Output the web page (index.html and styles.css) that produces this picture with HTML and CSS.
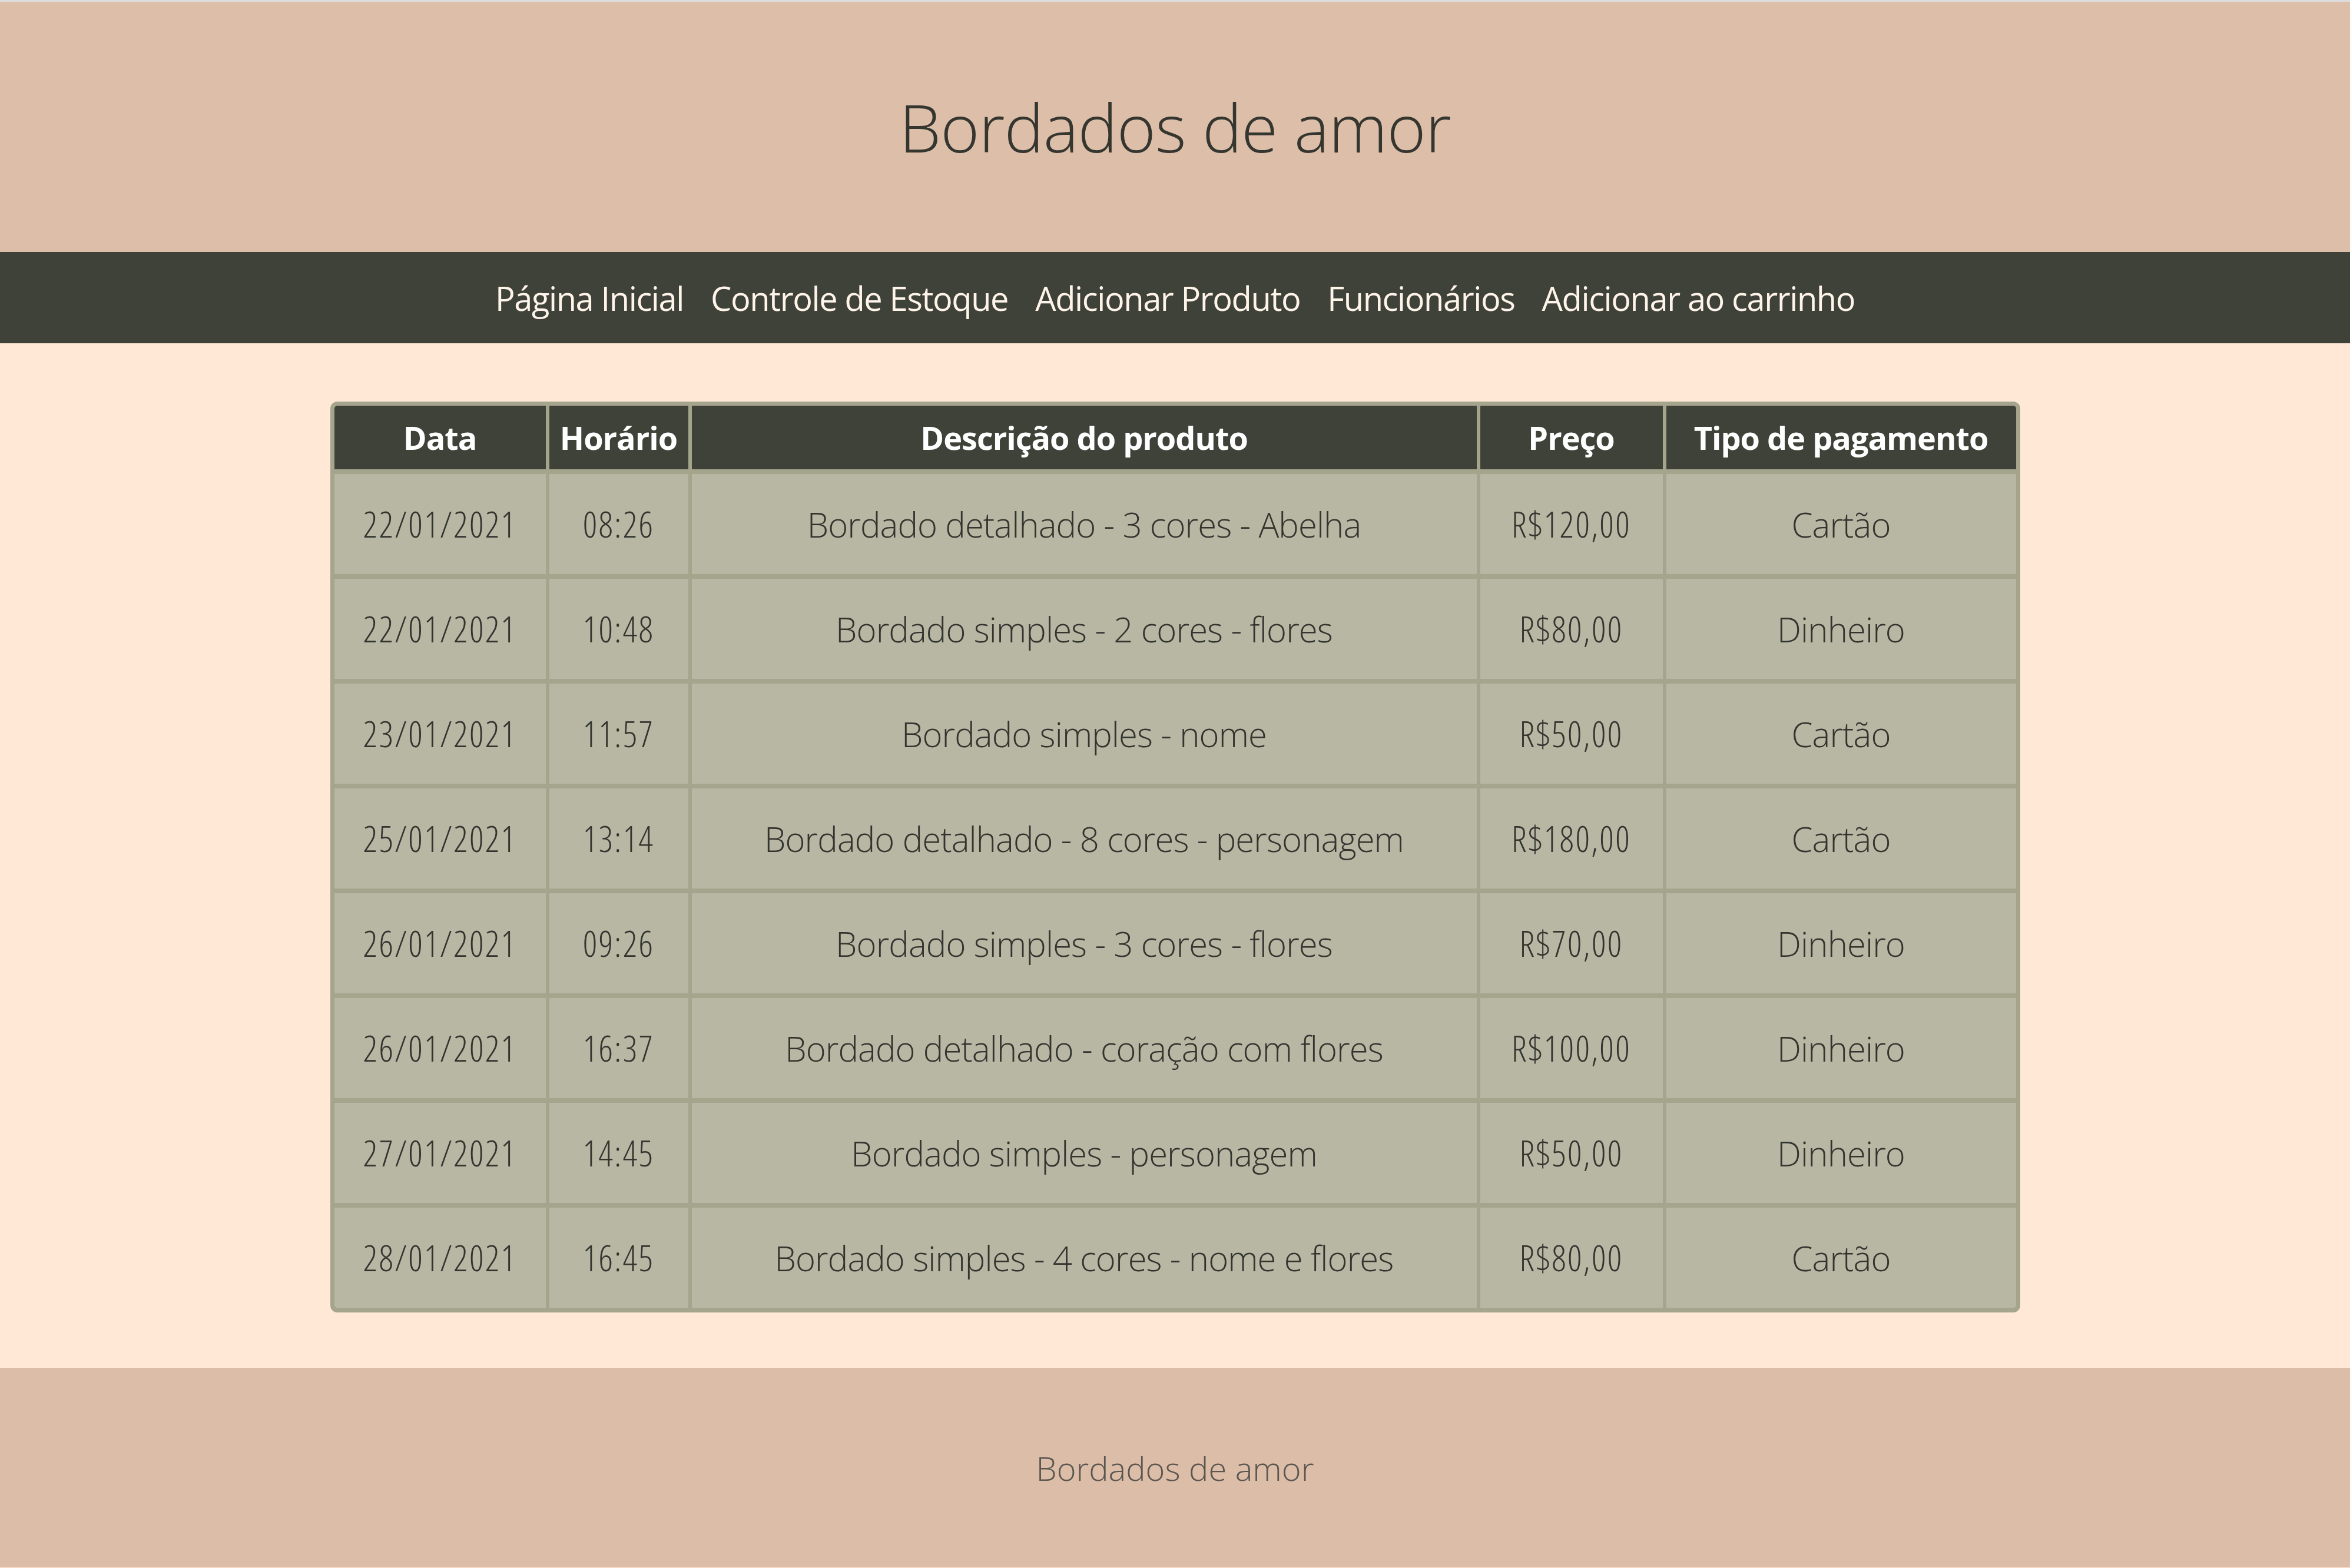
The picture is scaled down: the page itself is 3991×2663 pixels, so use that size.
FILE: index.html
```html
<!DOCTYPE html>
<html lang="pt-BR">
<head>
<meta charset="utf-8">
<title>Bordados de amor</title>
<link rel="stylesheet" href="styles.css">
</head>
<body>
<header class="site-header">
  <h1 class="site-title">Bordados de amor</h1>
</header>
<nav class="site-nav">
  <a href="#" class="nav-link">Página Inicial</a>
  <a href="#" class="nav-link">Controle de Estoque</a>
  <a href="#" class="nav-link">Adicionar Produto</a>
  <a href="#" class="nav-link">Funcionários</a>
  <a href="#" class="nav-link">Adicionar ao carrinho</a>
</nav>
<main class="content">
  <div class="table-wrap">
    <table class="sales">
      <colgroup>
        <col class="c-data">
        <col class="c-hora">
        <col class="c-desc">
        <col class="c-preco">
        <col class="c-tipo">
      </colgroup>
      <thead>
        <tr>
          <th>Data</th>
          <th>Horário</th>
          <th>Descrição do produto</th>
          <th>Preço</th>
          <th>Tipo de pagamento</th>
        </tr>
      </thead>
      <tbody>
        <tr><td>22/01/2021</td><td>08:26</td><td>Bordado detalhado - 3 cores - Abelha</td><td>R$120,00</td><td>Cartão</td></tr>
        <tr><td>22/01/2021</td><td>10:48</td><td>Bordado simples - 2 cores - flores</td><td>R$80,00</td><td>Dinheiro</td></tr>
        <tr><td>23/01/2021</td><td>11:57</td><td>Bordado simples - nome</td><td>R$50,00</td><td>Cartão</td></tr>
        <tr><td>25/01/2021</td><td>13:14</td><td>Bordado detalhado - 8 cores - personagem</td><td>R$180,00</td><td>Cartão</td></tr>
        <tr><td>26/01/2021</td><td>09:26</td><td>Bordado simples - 3 cores - flores</td><td>R$70,00</td><td>Dinheiro</td></tr>
        <tr><td>26/01/2021</td><td>16:37</td><td>Bordado detalhado - coração com flores</td><td>R$100,00</td><td>Dinheiro</td></tr>
        <tr><td>27/01/2021</td><td>14:45</td><td>Bordado simples - personagem</td><td>R$50,00</td><td>Dinheiro</td></tr>
        <tr><td>28/01/2021</td><td>16:45</td><td>Bordado simples - 4 cores - nome e flores</td><td>R$80,00</td><td>Cartão</td></tr>
      </tbody>
    </table>
  </div>
</main>
<footer class="site-footer">
  <p class="footer-text">Bordados de amor</p>
</footer>
</body>
</html>
```

FILE: styles.css
```css
html, body {
  margin: 0;
  padding: 0;
}

body {
  font-family: "Open Sans", "Noto Sans", sans-serif;
  background: #FFE8D6;
  color: #3a3b34;
  border-top: 3px solid #dcdcdf;
}

.site-header {
  height: 425px;
  background: #DDBEA9;
  display: flex;
  align-items: center;
  justify-content: center;
}

.site-title {
  margin: 0;
  font-size: 113px;
  font-weight: 300;
  letter-spacing: -1px;
  color: #35362f;
  line-height: 1;
}

.site-nav {
  height: 155px;
  background: #3F4238;
  display: flex;
  align-items: center;
  justify-content: center;
  gap: 46px;
}

.nav-link {
  color: #FFF4EA;
  text-decoration: none;
  font-size: 56px;
  font-weight: 400;
  letter-spacing: -1.4px;
}

.content {
  padding: 99px 0 94px;
}

.table-wrap {
  box-sizing: border-box;
  width: 2870px;
  margin: 0 auto;
  border: 7px solid #A5A58D;
  border-bottom-width: 8px;
  border-radius: 12px;
  overflow: hidden;
  background: #A5A58D;
}

.sales {
  width: 100%;
  border-collapse: collapse;
  table-layout: fixed;
}

.c-data { width: 362px; }
.c-hora { width: 242px; }
.c-desc { width: 1339px; }
.c-preco { width: 316px; }
.c-tipo { width: auto; }

.sales th,
.sales td {
  text-align: center;
  padding: 0;
  border-left: 6px solid #A5A58D;
  border-bottom: 8px solid #A5A58D;
}

.sales th:first-child,
.sales td:first-child {
  border-left: 0;
}

.sales tbody tr:last-child td {
  border-bottom: 0;
}

.sales th {
  height: 108px;
  background: #3F4238;
  color: #ffffff;
  font-size: 54px;
  font-weight: 700;
  letter-spacing: -1px;
}

.sales td {
  height: 170px;
  background: #B7B7A4;
  color: #33342e;
  font-size: 58px;
  font-weight: 300;
  letter-spacing: -0.9px;
}

/* date, time and price columns: tall narrow figures */
.sales td:nth-child(1),
.sales td:nth-child(2),
.sales td:nth-child(4) {
  font-size: 60px;
  font-stretch: 75%;
  letter-spacing: 2.4px;
}

.site-footer {
  height: 339px;
  background: #DCBDA8;
  display: flex;
  align-items: center;
  justify-content: center;
}

.footer-text {
  margin: 0;
  font-size: 56px;
  font-weight: 300;
  color: #5b5650;
}
```
